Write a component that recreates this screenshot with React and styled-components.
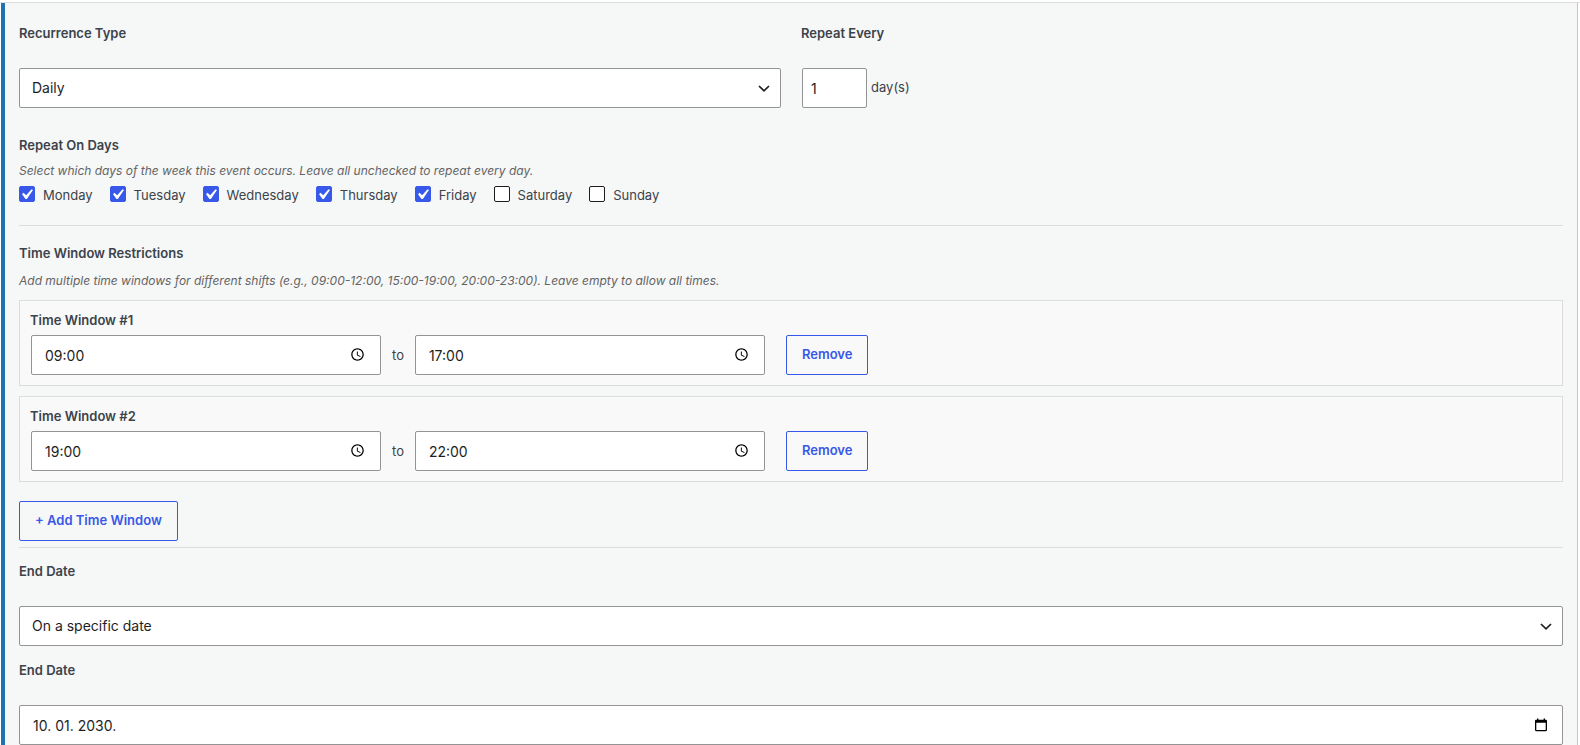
import React, { useState } from 'react';
import styled, { createGlobalStyle } from 'styled-components';

const WEEK_DAYS = ['Monday', 'Tuesday', 'Wednesday', 'Thursday', 'Friday', 'Saturday', 'Sunday'];

const ClockIcon = () => (
  <svg width="15" height="15" viewBox="0 0 24 24" fill="#000" aria-hidden="true">
    <path d="M11.99 2C6.47 2 2 6.48 2 12s4.47 10 9.99 10C17.52 22 22 17.52 22 12S17.52 2 11.99 2zM12 20c-4.42 0-8-3.58-8-8s3.58-8 8-8 8 3.58 8 8-3.58 8-8 8z" />
    <path d="M12.5 7H11v6l5.25 3.15.75-1.23-4.5-2.67z" />
  </svg>
);

const CalendarIcon = () => (
  <svg width="16" height="16" viewBox="0 0 16 16" fill="#000" aria-hidden="true">
    <path d="M4 1.6h1.4v1.2h5.2V1.6H12v1.2h.8c.7 0 1.2.5 1.2 1.2v9c0 .7-.5 1.2-1.2 1.2H3.2C2.5 14.2 2 13.7 2 13V4c0-.7.5-1.2 1.2-1.2H4zM3.3 5.8v7.1h9.4V5.8z" />
  </svg>
);

const ChevronIcon = () => (
  <svg width="24" height="24" viewBox="0 0 24 24" fill="none" stroke="#1e1e1e" strokeWidth="1.7" aria-hidden="true">
    <path d="M7 10l5 4.800 5-4.800" />
  </svg>
);

const CheckIcon = () => (
  <svg width="21" height="21" viewBox="0 0 20 20" fill="#fff" aria-hidden="true">
    <path d="M14.83 4.89l1.34.94-5.81 8.38H9.02L5.78 9.67l1.34-1.25 2.57 2.4z" />
  </svg>
);

const App = () => {
  const [type, setType] = useState('daily');
  const [interval, setInterval] = useState(1);
  const [days, setDays] = useState(WEEK_DAYS.slice(0, 5));
  const [windows, setWindows] = useState([
    { id: 1, from: '09:00', to: '17:00' },
    { id: 2, from: '19:00', to: '22:00' },
  ]);
  const [endType, setEndType] = useState('date');
  const [endDate, setEndDate] = useState('10. 01. 2030.');

  const toggleDay = (day) => {
    setDays(days.includes(day) ? days.filter((d) => d !== day) : [...days, day]);
  };

  const updateWindow = (id, key, value) => {
    setWindows(windows.map((w) => (w.id === id ? { ...w, [key]: value } : w)));
  };

  const removeWindow = (id) => {
    setWindows(windows.filter((w) => w.id !== id));
  };

  const addWindow = () => {
    setWindows([...windows, { id: Date.now(), from: '', to: '' }]);
  };

  return (
    <>
      <GlobalStyle />
      <Page>
        <Panel>
          <RecurrenceRow>
            <Field>
              <Label htmlFor="recurrence-type">Recurrence Type</Label>
              <SelectWrap>
                <Select id="recurrence-type" value={type} onChange={(e) => setType(e.target.value)}>
                  <option value="daily">Daily</option>
                  <option value="weekly">Weekly</option>
                  <option value="monthly">Monthly</option>
                </Select>
                <ChevronIcon />
              </SelectWrap>
            </Field>
            <Field>
              <Label htmlFor="repeat-every">Repeat Every</Label>
              <IntervalRow>
                <NumberInput
                  id="repeat-every"
                  type="number"
                  min="1"
                  value={interval}
                  onChange={(e) => setInterval(e.target.value)}
                />
                <Unit>day(s)</Unit>
              </IntervalRow>
            </Field>
          </RecurrenceRow>

          <DaysSection>
            <Legend>Repeat On Days</Legend>
            <Description $top={6}>
              Select which days of the week this event occurs. Leave all unchecked to repeat every day.
            </Description>
            <DayList>
              {WEEK_DAYS.map((day) => (
                <DayLabel key={day}>
                  <CheckWrap>
                    <Checkbox type="checkbox" checked={days.includes(day)} onChange={() => toggleDay(day)} />
                    {days.includes(day) && <CheckIcon />}
                  </CheckWrap>
                  {day}
                </DayLabel>
              ))}
            </DayList>
          </DaysSection>

          <WindowsSection>
            <Heading>Time Window Restrictions</Heading>
            <Description $top={8}>
              Add multiple time windows for different shifts (e.g., 09:00-12:00, 15:00-19:00, 20:00-23:00). Leave
              empty to allow all times.
            </Description>
            <WindowList>
              {windows.map((w, index) => (
                <WindowCard key={w.id}>
                  <Label htmlFor={`from-${w.id}`}>Time Window #{index + 1}</Label>
                  <WindowRow>
                    <TimeField>
                      <TextInput
                        id={`from-${w.id}`}
                        value={w.from}
                        onChange={(e) => updateWindow(w.id, 'from', e.target.value)}
                      />
                      <ClockIcon />
                    </TimeField>
                    <span>to</span>
                    <TimeField>
                      <TextInput
                        aria-label={`Time Window #${index + 1} end`}
                        value={w.to}
                        onChange={(e) => updateWindow(w.id, 'to', e.target.value)}
                      />
                      <ClockIcon />
                    </TimeField>
                    <RemoveButton type="button" onClick={() => removeWindow(w.id)}>
                      Remove
                    </RemoveButton>
                  </WindowRow>
                </WindowCard>
              ))}
            </WindowList>
            <Button type="button" onClick={addWindow}>
              + Add Time Window
            </Button>
          </WindowsSection>

          <EndSection>
            <Field>
              <Label htmlFor="end-type">End Date</Label>
              <SelectWrap>
                <Select id="end-type" value={endType} onChange={(e) => setEndType(e.target.value)}>
                  <option value="never">Never</option>
                  <option value="date">On a specific date</option>
                </Select>
                <ChevronIcon />
              </SelectWrap>
            </Field>
            <Field>
              <Label htmlFor="end-date">End Date</Label>
              <DateField>
                <TextInput id="end-date" value={endDate} onChange={(e) => setEndDate(e.target.value)} />
                <CalendarIcon />
              </DateField>
            </Field>
          </EndSection>
        </Panel>
      </Page>
    </>
  );
};

export default App;

const GlobalStyle = createGlobalStyle`
  * {
    box-sizing: border-box;
  }

  body {
    margin: 0;
    background: #fff;
    color: #3c434a;
    font-family: Inter, sans-serif;
    font-size: 13px;
    line-height: 20px;
  }

  input,
  select,
  button {
    margin: 0;
    font-family: inherit;
  }
`;

const Page = styled.main`
  margin-top: 2px;
  border-top: 1px solid #dcdcde;
  padding: 0 2px 0 1px;
`;

const Panel = styled.form`
  border-left: 4px solid #2271b1;
  border-right: 1px solid #c3c4c7;
  padding: 20px 14px 0;
  background: #f6f7f7;
`;

const RecurrenceRow = styled.div`
  display: grid;
  grid-template-columns: 1fr 1fr;
  gap: 20px;
`;

const Label = styled.label`
  font-weight: 600;
`;

const Field = styled.div`
  display: flex;
  flex-direction: column;
  gap: 25px;
`;

const SelectWrap = styled.div`
  position: relative;

  svg {
    position: absolute;
    top: 8px;
    right: 5px;
    pointer-events: none;
  }
`;

const Select = styled.select`
  display: block;
  width: 100%;
  height: 40px;
  padding: 0 32px 2px 12px;
  border: 1px solid #949494;
  border-radius: 2px;
  background: #fff;
  color: #1e1e1e;
  font-size: 14px;
  appearance: none;
`;

const TextInput = styled.input`
  display: block;
  width: 100%;
  height: 40px;
  padding: 0 32px 0 13px;
  border: 1px solid #949494;
  border-radius: 2px;
  background: #fff;
  color: #1e1e1e;
  font-size: 14px;
`;

const NumberInput = styled(TextInput)`
  width: 65px;
  padding: 0 8px;
  appearance: textfield;
`;

const IntervalRow = styled.div`
  display: flex;
  align-items: center;
  gap: 4px;
  padding-left: 1px;
`;

const Unit = styled.span`
  padding-bottom: 2px;
`;

const DaysSection = styled.fieldset`
  margin: 27px 0 0;
  border: 0;
  border-bottom: 1px solid #dcdcde;
  padding: 0 0 20px;
`;

const Legend = styled.legend`
  padding: 0;
  font-weight: 600;
`;

const Description = styled.p`
  margin: ${({ $top }) => $top}px 0 0;
  color: #646464;
  font-size: 12px;
  font-style: italic;
`;

const DayList = styled.div`
  display: flex;
  flex-wrap: wrap;
  gap: 17px;
  margin-top: 4px;
`;

const DayLabel = styled.label`
  display: flex;
  align-items: center;
  gap: 8px;
`;

const CheckWrap = styled.span`
  position: relative;
  display: flex;
  margin-bottom: 2px;

  svg {
    position: absolute;
    top: -2px;
    left: -3px;
    pointer-events: none;
  }
`;

const Checkbox = styled.input`
  width: 16px;
  height: 16px;
  border: 1px solid #1e1e1e;
  border-radius: 2px;
  background: #fff;
  appearance: none;

  &:checked {
    border-color: #3858e9;
    background: #3858e9;
  }
`;

const WindowsSection = styled.section`
  border-bottom: 1px solid #dcdcde;
  padding: 17px 0 6px;
`;

const Heading = styled.h4`
  margin: 0;
  font-size: 13px;
  font-weight: 600;
`;

const WindowList = styled.div`
  display: flex;
  flex-direction: column;
  gap: 10px;
  margin: 9px 0 19px;
`;

const WindowCard = styled.div`
  border: 1px solid #dcdcde;
  padding: 9px 10px 10px;
  background: #f9f9f9;
`;

const WindowRow = styled.div`
  display: flex;
  align-items: center;
  gap: 11px;
  margin-top: 5px;
  padding-left: 1px;
`;

const TimeField = styled.div`
  position: relative;
  flex: 0 1 350px;

  svg {
    position: absolute;
    top: 12px;
    right: 16px;
  }
`;

const DateField = styled(TimeField)`
  flex: none;

  svg {
    right: 14px;
  }
`;

const Button = styled.button`
  height: 40px;
  padding: 0 15px 2px;
  border: 1px solid #3858e9;
  border-radius: 2px;
  background: transparent;
  color: #3858e9;
  font-size: 13px;
  font-weight: 600;
  cursor: pointer;
`;

const RemoveButton = styled(Button)`
  margin-left: 10px;
`;

const EndSection = styled.section`
  display: flex;
  flex-direction: column;
  gap: 14px;
  padding-top: 13px;
`;
